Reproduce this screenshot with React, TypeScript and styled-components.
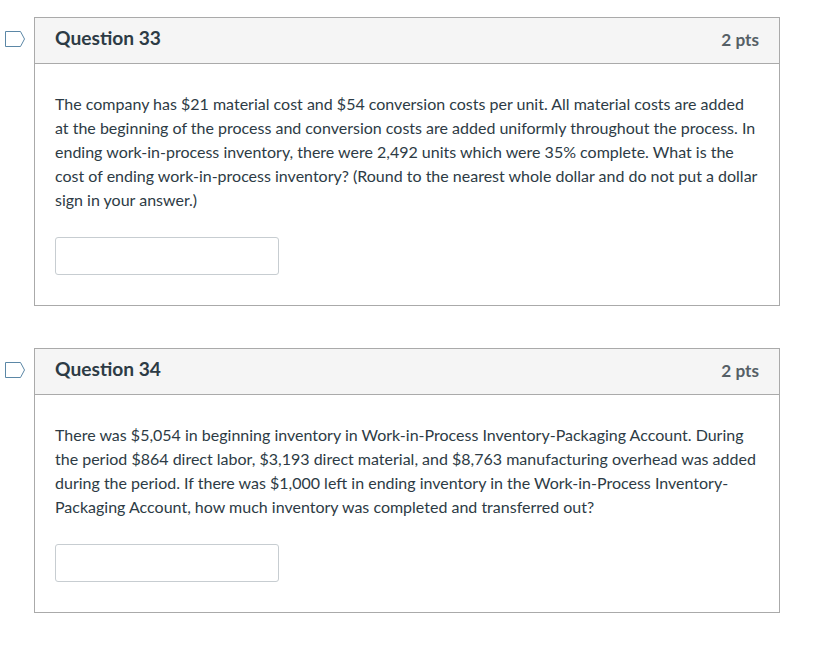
import React from 'react'
import styled, { createGlobalStyle } from 'styled-components'

const GlobalStyle = createGlobalStyle`
  html, body {
    margin: 0;
    background: #fff;
    font-family: Lato, "Open Sans", sans-serif;
    color: #2d3b45;
  }
`

const Page = styled.div`
  display: flex;
  flex-direction: column;
  gap: 42px;
  width: 746px;
  padding: 17px 0 0 34px;
`

const Card = styled.section`
  position: relative;
  box-sizing: border-box;
  display: flex;
  flex-direction: column;
  height: ${(p: { $height: number }) => p.$height}px;
  border: 1px solid #aaaaaa;
`

const Flag = styled.svg`
  position: absolute;
  left: -31px;
  top: 12px;
  width: 22px;
  height: 18px;
`

const Header = styled.header`
  box-sizing: border-box;
  display: flex;
  align-items: center;
  justify-content: space-between;
  height: 46px;
  padding: 0 20px;
  background: #f5f5f5;
  border-bottom: 1px solid #aaaaaa;
`

const Title = styled.h2`
  margin: 0 0 6px;
  font-size: 19.2px;
  font-weight: 700;
  line-height: 40px;
  color: #2d3b45;
`

const Points = styled.span`
  font-size: 17.2px;
  font-weight: 700;
  margin-bottom: 2px;
  color: #555f66;
`

const Body = styled.div`
  padding: 28px 20px 0;
`

const Text = styled.p`
  margin: 0;
  font-size: 16px;
  line-height: 24px;
  color: #2d3b45;
`

const Answer = styled.input`
  display: block;
  box-sizing: border-box;
  width: 224px;
  height: 38px;
  margin-top: 25px;
  border: 1px solid #c7cdd1;
  border-radius: 3px;
  background: #fff;
`

type Question = {
  title: string
  height: number
  text: string
}

const questions: Question[] = [
  {
    title: 'Question 33',
    height: 289,
    text: 'The company has $21 material cost and $54 conversion costs per unit. All material costs are added at the beginning of the process and conversion costs are added uniformly throughout the process. In ending work-in-process inventory, there were 2,492 units which were 35% complete. What is the cost of ending work-in-process inventory? (Round to the nearest whole dollar and do not put a dollar sign in your answer.)',
  },
  {
    title: 'Question 34',
    height: 265,
    text: 'There was $5,054 in beginning inventory in Work-in-Process Inventory-Packaging Account. During the period $864 direct labor, $3,193 direct material, and $8,763 manufacturing overhead was added during the period. If there was $1,000 left in ending inventory in the Work-in-Process Inventory-Packaging Account, how much inventory was completed and transferred out?',
  },
]

export default function App() {
  return (
    <>
      <GlobalStyle />
      <Page>
        {questions.map((q) => (
          <Card key={q.title} $height={q.height}>
            <Flag viewBox="0 0 22 18" fill="none">
              <path d="M1.5 1.5H16.5L20.5 9L16.5 16.5H1.5Z" stroke="#5b87a6" strokeWidth="1" />
            </Flag>
            <Header>
              <Title>{q.title}</Title>
              <Points>2 pts</Points>
            </Header>
            <Body>
              <Text>{q.text}</Text>
              <Answer type="text" />
            </Body>
          </Card>
        ))}
      </Page>
    </>
  )
}
